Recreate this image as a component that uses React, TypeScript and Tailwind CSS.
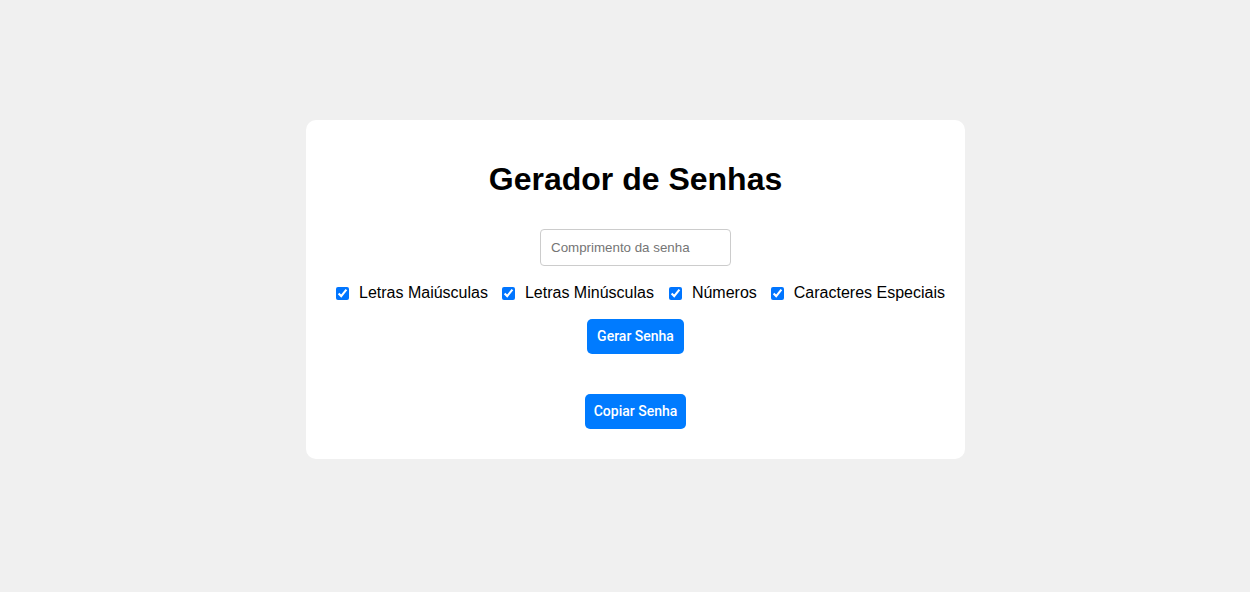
const options = [
  'Letras Maiúsculas',
  'Letras Minúsculas',
  'Números',
  'Caracteres Especiais',
]

export default function App() {
  return (
    <div className="min-h-[592px] w-full bg-[#f0f0f0] font-['Liberation_Sans',Arial,sans-serif] text-black">
      <div className="flex justify-center pt-[120px] pl-[21px]">
        {/* Card */}
        <div className="flex w-[659px] flex-col items-center rounded-[10px] bg-white pt-[41px] pb-[30px]">
          <h1 className="text-[32px] leading-[37px] font-bold">Gerador de Senhas</h1>

          <input
            type="number"
            placeholder="Comprimento da senha"
            className="mt-[31px] h-[37px] w-[191px] rounded-[4px] border border-[#cccccc] px-[10px] text-[13.33px] outline-none placeholder:text-[#757575]"
          />

          {/* Options */}
          <div className="mt-[18px] flex h-[18px] w-full items-center justify-center gap-[14px] pl-[10px]">
            {options.map((opt, i) => (
              <label
                key={opt}
                className={i === 2 ? 'ml-[1px] flex items-center gap-[10px] text-[16px] leading-[18px] whitespace-nowrap' : 'flex items-center gap-[10px] text-[16px] leading-[18px] whitespace-nowrap'}
              >
                <input type="checkbox" defaultChecked className="h-[13px] w-[13px] accent-[#0075ff]" />
                {opt}
              </label>
            ))}
          </div>

          <button className="mt-[17px] h-[35px] w-[97px] rounded-[5px] bg-[#007bff] font-['Roboto',sans-serif] text-[14px] font-medium text-white">
            Gerar Senha
          </button>

          <div className="h-[40px]" />

          <button className="h-[35px] w-[101px] rounded-[5px] bg-[#007bff] font-['Roboto',sans-serif] text-[14px] font-medium text-white">
            Copiar Senha
          </button>
        </div>
      </div>
    </div>
  )
}
